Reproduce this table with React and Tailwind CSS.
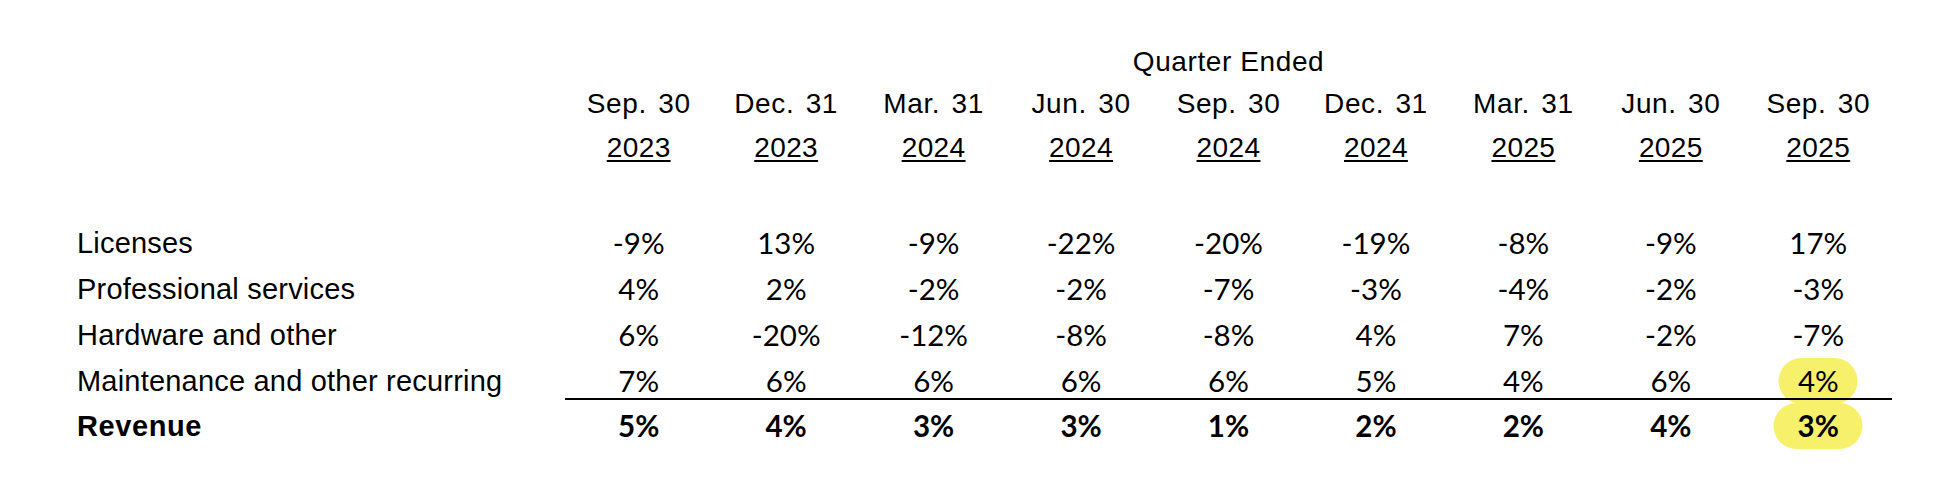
import React from 'react'

const quarters = [
  { month: 'Sep. 30', year: '2023' },
  { month: 'Dec. 31', year: '2023' },
  { month: 'Mar. 31', year: '2024' },
  { month: 'Jun. 30', year: '2024' },
  { month: 'Sep. 30', year: '2024' },
  { month: 'Dec. 31', year: '2024' },
  { month: 'Mar. 31', year: '2025' },
  { month: 'Jun. 30', year: '2025' },
  { month: 'Sep. 30', year: '2025' },
]

const rows = [
  { label: 'Licenses', values: ['-9%', '13%', '-9%', '-22%', '-20%', '-19%', '-8%', '-9%', '17%'] },
  { label: 'Professional services', values: ['4%', '2%', '-2%', '-2%', '-7%', '-3%', '-4%', '-2%', '-3%'] },
  { label: 'Hardware and other', values: ['6%', '-20%', '-12%', '-8%', '-8%', '4%', '7%', '-2%', '-7%'] },
]

const maintenance = ['7%', '6%', '6%', '6%', '6%', '5%', '4%', '6%', '4%']
const revenue = ['5%', '4%', '3%', '3%', '1%', '2%', '2%', '4%', '3%']

const grid = 'grid w-[1815px] grid-cols-[488px_repeat(9,minmax(0,1fr))]'
const label = "font-['Liberation_Sans',Arial,sans-serif] text-[29px] tracking-[0.2px] text-black whitespace-nowrap"
const num = "text-center font-['Lato',sans-serif] text-[29.5px] text-black"

const Highlight = ({ w, h, children }) => (
  <span className="relative inline-block">
    <span className={`absolute left-1/2 top-1/2 -translate-x-1/2 -translate-y-1/2 rounded-full bg-[#f6f06b] ${w} ${h}`} />
    <span className="relative">{children}</span>
  </span>
)

const App = () => {
  return (
    <div className="min-h-screen w-full bg-white pl-[77px] pt-[41px]">
      <div className={`${grid} leading-[42px] font-['Liberation_Sans',Arial,sans-serif] text-[28px] tracking-[0.6px] text-black`}>
        <div className="col-start-6 flex justify-center whitespace-nowrap">Quarter Ended</div>
      </div>
      <div className={`${grid} leading-[42px] font-['Liberation_Sans',Arial,sans-serif] text-[28px] tracking-[0.6px] text-black`}>
        <div />
        {quarters.map((q, i) => (
          <div key={i} className="whitespace-nowrap text-center [word-spacing:3px]">{q.month}</div>
        ))}
      </div>
      <div className={`${grid} leading-[46px] font-['Liberation_Sans',Arial,sans-serif] text-[28px] tracking-[0.4px] text-black`}>
        <div />
        {quarters.map((q, i) => (
          <div key={i} className="text-center">
            <span className="underline decoration-2 underline-offset-[3px]">{q.year}</span>
          </div>
        ))}
      </div>

      <div className="mt-[49px]">
        {rows.map((r) => (
          <div key={r.label} className={`${grid} leading-[46px]`}>
            <div className={label}>{r.label}</div>
            {r.values.map((v, i) => (
              <div key={i} className={num}>{v}</div>
            ))}
          </div>
        ))}

        <div className={`${grid} h-[40px] leading-[46px]`}>
          <div className={label}>Maintenance and other recurring</div>
          {maintenance.map((v, i) => (
            <div key={i} className={num}>
              {i === 8 ? <Highlight w="w-[79px]" h="h-[46px]">{v}</Highlight> : v}
            </div>
          ))}
        </div>

        <div className={`${grid} relative z-10 leading-[46px]`}>
          <div className="col-span-full ml-[488px] border-t-2 border-black" />
          <div className={`${label} pt-[3px] font-bold tracking-[0.6px]`}>Revenue</div>
          {revenue.map((v, i) => (
            <div key={i} className={`${num} pt-[3px] font-bold`}>
              {i === 8 ? <Highlight w="w-[89px]" h="h-[46px]">{v}</Highlight> : v}
            </div>
          ))}
        </div>
      </div>
    </div>
  )
}

export default App
